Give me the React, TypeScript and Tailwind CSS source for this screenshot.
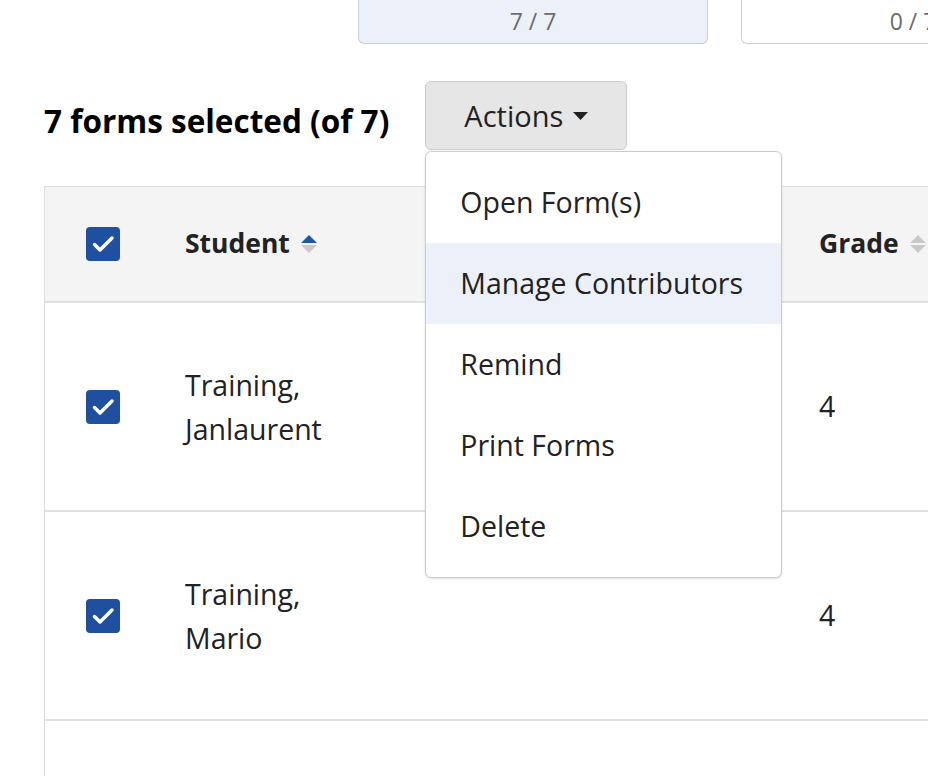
import React from "react";

const font = { fontFamily: '"Open Sans", "Liberation Sans", sans-serif' };

const Checkbox: React.FC = () => (
  <div className="w-[34px] h-[34px] rounded-[4px] bg-[#1f4f9f]">
    <svg width="34" height="34" viewBox="0 0 34 34" fill="none">
      <path d="M8.5 17.5l5.5 5.5L26 11" stroke="white" strokeWidth="3.5" strokeLinecap="round" strokeLinejoin="round" />
    </svg>
  </div>
);

const SortIcon: React.FC<{ active?: boolean }> = ({ active }) => (
  <svg width="18" height="24" viewBox="0 0 18 24" className="ml-[10px]">
    <path d="M1 11L9 3l8 8z" fill={active ? "#2456a6" : "#c9c9c9"} />
    <path d="M1 13l8 8 8-8z" fill="#c9c9c9" />
  </svg>
);

const rows = [
  { last: "Training,", first: "Janlaurent", grade: "4" },
  { last: "Training,", first: "Mario", grade: "4" },
];

const menuItems = ["Open Form(s)", "Manage Contributors", "Remind", "Print Forms", "Delete"];

const App: React.FC = () => {
  return (
    <div className="w-[928px] h-[776px] overflow-hidden bg-white text-[#222]" style={font}>
      {/* stat boxes */}
      <div className="flex gap-[33px] pl-[358px]">
        <div className="w-[350px] h-[44px] shrink-0 bg-[#ecf0f8] border border-t-0 border-[#cfcfcf] rounded-b-[6px] flex items-center justify-center text-[23px] text-[#6b6b6b]">
          7 / 7
        </div>
        <div className="w-[344px] h-[44px] shrink-0 bg-white border border-t-0 border-[#cfcfcf] rounded-b-[6px] flex items-center justify-center text-[23px] text-[#6b6b6b]">
          0 / 7
        </div>
      </div>

      {/* selection header */}
      <div className="flex items-center pl-[44px] mt-[37px]">
        <h2 className="text-[31.5px] font-bold text-black mr-[36px] mt-[10px]">7 forms selected (of 7)</h2>
        <div className="relative">
          <button className="w-[202px] h-[69px] bg-[#e6e6e6] border border-[#cccccc] rounded-[6px] flex items-center justify-center gap-[10px] text-[29px] text-[#222]">
            Actions
            <svg width="15" height="8" viewBox="0 0 15 8">
              <path d="M0 0h15L7.5 8z" fill="#222" />
            </svg>
          </button>
          <div className="absolute left-0 top-[70px] z-10 w-[357px] bg-white border border-[#cccccc] rounded-[6px] py-[10px] shadow-sm">
            {menuItems.map((item) => (
              <div
                key={item}
                className={`h-[81px] flex items-center pl-[34px] text-[28.5px] text-[#222] ${
                  item === "Manage Contributors" ? "bg-[#ecf0f8]" : ""
                }`}
              >
                {item}
              </div>
            ))}
          </div>
        </div>
      </div>

      {/* table */}
      <div className="ml-[44px] mt-[36px] w-[1000px] border-l border-t border-[#dedede]">
        <div className="flex h-[116px] items-center bg-[#f4f4f4] border-b-2 border-[#e0e0e0]">
          <div className="w-[140px] pl-[41px]">
            <Checkbox />
          </div>
          <div className="w-[634px] flex items-center text-[26.5px] font-bold text-[#222]">
            Student
            <SortIcon active />
          </div>
          <div className="flex items-center text-[26.5px] font-bold text-[#222]">
            Grade
            <SortIcon />
          </div>
        </div>
        {rows.map((r, i) => (
          <div key={i} className="flex h-[209px] items-center border-b-2 border-[#e0e0e0]">
            <div className="w-[140px] pl-[41px]">
              <Checkbox />
            </div>
            <div className="w-[634px] text-[28.5px] leading-[44px] text-[#222]">
              <div>{r.last}</div>
              <div>{r.first}</div>
            </div>
            <div className="text-[28.5px] text-[#222]">{r.grade}</div>
          </div>
        ))}
        <div className="h-[80px]" />
      </div>
    </div>
  );
};

export default App;
